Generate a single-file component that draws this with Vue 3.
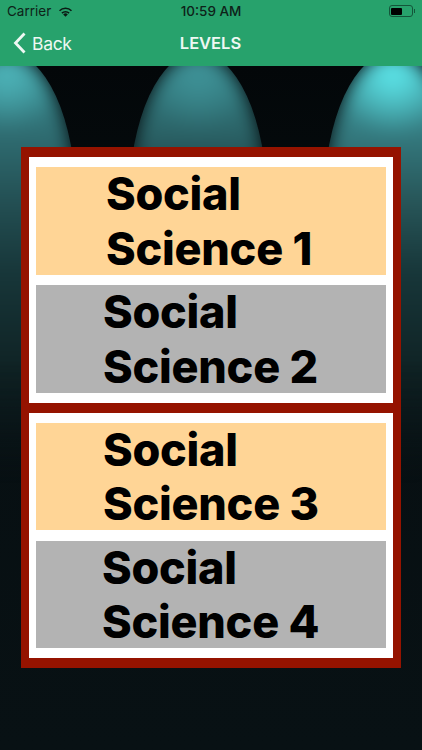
<template>
  <div class="screen">
    <header class="topbar">
      <div class="status">
        <div class="status-left">
          <span>Carrier</span>
          <svg class="wifi" viewBox="0 0 16 12" width="15" height="11">
            <path d="M8 11.800 5.500 9.200a3.500 3.500 0 0 1 5 0L8 11.800Z" fill="#0b1a13" />
            <path d="M3.500 7.200a6.400 6.400 0 0 1 9 0l-1.200 1.200a4.700 4.700 0 0 0-6.600 0L3.500 7.200Z" fill="#0b1a13" />
            <path d="M.9 4.500a10 10 0 0 1 14.200 0l-1.200 1.300a8.300 8.300 0 0 0-11.800 0L.9 4.500Z" fill="#0b1a13" />
          </svg>
        </div>
        <span class="time">10:59 AM</span>
        <div class="battery">
          <div class="battery-body"><div class="battery-level"></div></div>
          <div class="battery-cap"></div>
        </div>
      </div>
      <nav class="navbar">
        <div class="back">
          <svg viewBox="0 0 14 22" width="14" height="22">
            <path d="M11.500 1.500 2.500 11l9 9.500" fill="none" stroke="#eef8f3" stroke-width="2.800" />
          </svg>
          <span>Back</span>
        </div>
        <div class="title">LEVELS</div>
      </nav>
    </header>

    <main class="stage">
      <div class="lights">
        <div class="lamp lamp-left"></div>
        <div class="lamp lamp-mid"></div>
        <div class="lamp lamp-right"></div>
      </div>

      <div class="frame">
        <section v-for="(group, i) in groups" :key="i" class="panel">
          <div
            v-for="level in group"
            :key="level.n"
            class="level"
            :class="[level.color, 'level-' + level.n]"
          >
            Social<br />Science {{ level.n }}
          </div>
        </section>
      </div>
    </main>
  </div>
</template>

<script setup>
const groups = [
  [{ n: 1, color: 'peach' }, { n: 2, color: 'grey' }],
  [{ n: 3, color: 'peach' }, { n: 4, color: 'grey' }]
]
</script>

<style scoped>
.screen {
  width: 422px;
  height: 750px;
  display: flex;
  flex-direction: column;
  overflow: hidden;
  background: #070f12;
  font-family: Inter, "Liberation Sans", sans-serif;
}

.topbar {
  height: 66px;
  flex-shrink: 0;
  background: #27a26c;
  position: relative;
  z-index: 2;
}

.status {
  height: 22px;
  padding: 0 7px;
  display: flex;
  align-items: center;
  justify-content: space-between;
  position: relative;
  font-size: 13.500px;
  color: #0e2219;
}

.status-left {
  display: flex;
  align-items: center;
  gap: 7px;
}

.time {
  position: absolute;
  left: 0;
  right: 0;
  text-align: center;
  font-weight: 500;
}

.battery {
  display: flex;
  align-items: center;
  gap: 1px;
}

.battery-body {
  width: 24px;
  height: 12px;
  box-sizing: border-box;
  border: 1px solid #14553a;
  border-radius: 3px;
  padding: 1.500px;
}

.battery-level {
  width: 60%;
  height: 100%;
  background: #000;
  border-radius: 1px;
}

.battery-cap {
  width: 1.500px;
  height: 4px;
  background: #14553a;
}

.navbar {
  height: 42px;
  display: flex;
  align-items: center;
  justify-content: center;
  position: relative;
  color: #eef8f3;
}

.back {
  position: absolute;
  left: 13px;
  display: flex;
  align-items: center;
  gap: 5px;
  font-size: 17.500px;
  letter-spacing: -0.300px;
}

.title {
  font-size: 16.500px;
  font-weight: 600;
  margin-right: 1px;
}

.stage {
  flex: 1;
  position: relative;
  padding: 81px 21px 0;
}

.lights {
  position: absolute;
  inset: 0;
  overflow: hidden;
  background: linear-gradient(#030709, #070f12 45%, #081114);
}

.lamp {
  position: absolute;
  top: -14px;
  width: 138px;
  height: 440px;
  border-radius: 50% 50% 50% 50% / 34% 34% 30% 30%;
  filter: blur(9px);
  background-repeat: no-repeat;
  -webkit-mask-image: linear-gradient(#000 70%, transparent 98%);
  mask-image: linear-gradient(#000 70%, transparent 98%);
}

.lamp-left {
  left: -62px;
  background-image:
    radial-gradient(ellipse 60px 55px at 50% 24px, #4eb6bb, rgba(78, 182, 187, 0) 100%),
    linear-gradient(#3a8c91 12px, #2f6d72 80px, #234f53 150px, #173639 220px, #0f2224 320px, #0a1518 440px);
}

.lamp-mid {
  left: 129px;
  background-image:
    radial-gradient(ellipse 60px 55px at 50% 24px, #3f9398, rgba(63, 147, 152, 0) 100%),
    linear-gradient(#347f84 12px, #2b6367 80px, #1c3f43 135px, #0c1d20 200px, #070f12 280px);
}

.lamp-right {
  left: 324px;
  background-image:
    radial-gradient(ellipse 62px 60px at 50% 24px, #5de8ec, rgba(93, 232, 236, 0) 100%),
    linear-gradient(#3f9ca1 12px, #347a7f 80px, #275558 150px, #173639 220px, #0f2224 320px, #0a1518 440px);
}

.frame {
  position: relative;
  width: 380px;
  box-sizing: border-box;
  background: #951300;
  padding: 10px 8px;
  display: flex;
  flex-direction: column;
  gap: 10px;
}

.panel {
  background: #fff;
  padding: 10px 7px;
  display: flex;
  flex-direction: column;
  gap: 10.500px;
}

.level {
  height: 107.500px;
  font-size: 45px;
  font-weight: 800;
  line-height: 54.500px;
  color: #000;
  letter-spacing: -0.250px;
  white-space: nowrap;
}

.peach {
  background: #ffd596;
}

.grey {
  background: #b3b3b3;
}

.level-1 {
  padding-left: 70px;
}

.level-2 {
  padding-left: 67px;
}

.level-3 {
  padding-left: 67px;
}

.level-4 {
  padding-left: 66px;
}
</style>

<style>
html,
body {
  margin: 0;
  background: #070f12;
}
</style>
